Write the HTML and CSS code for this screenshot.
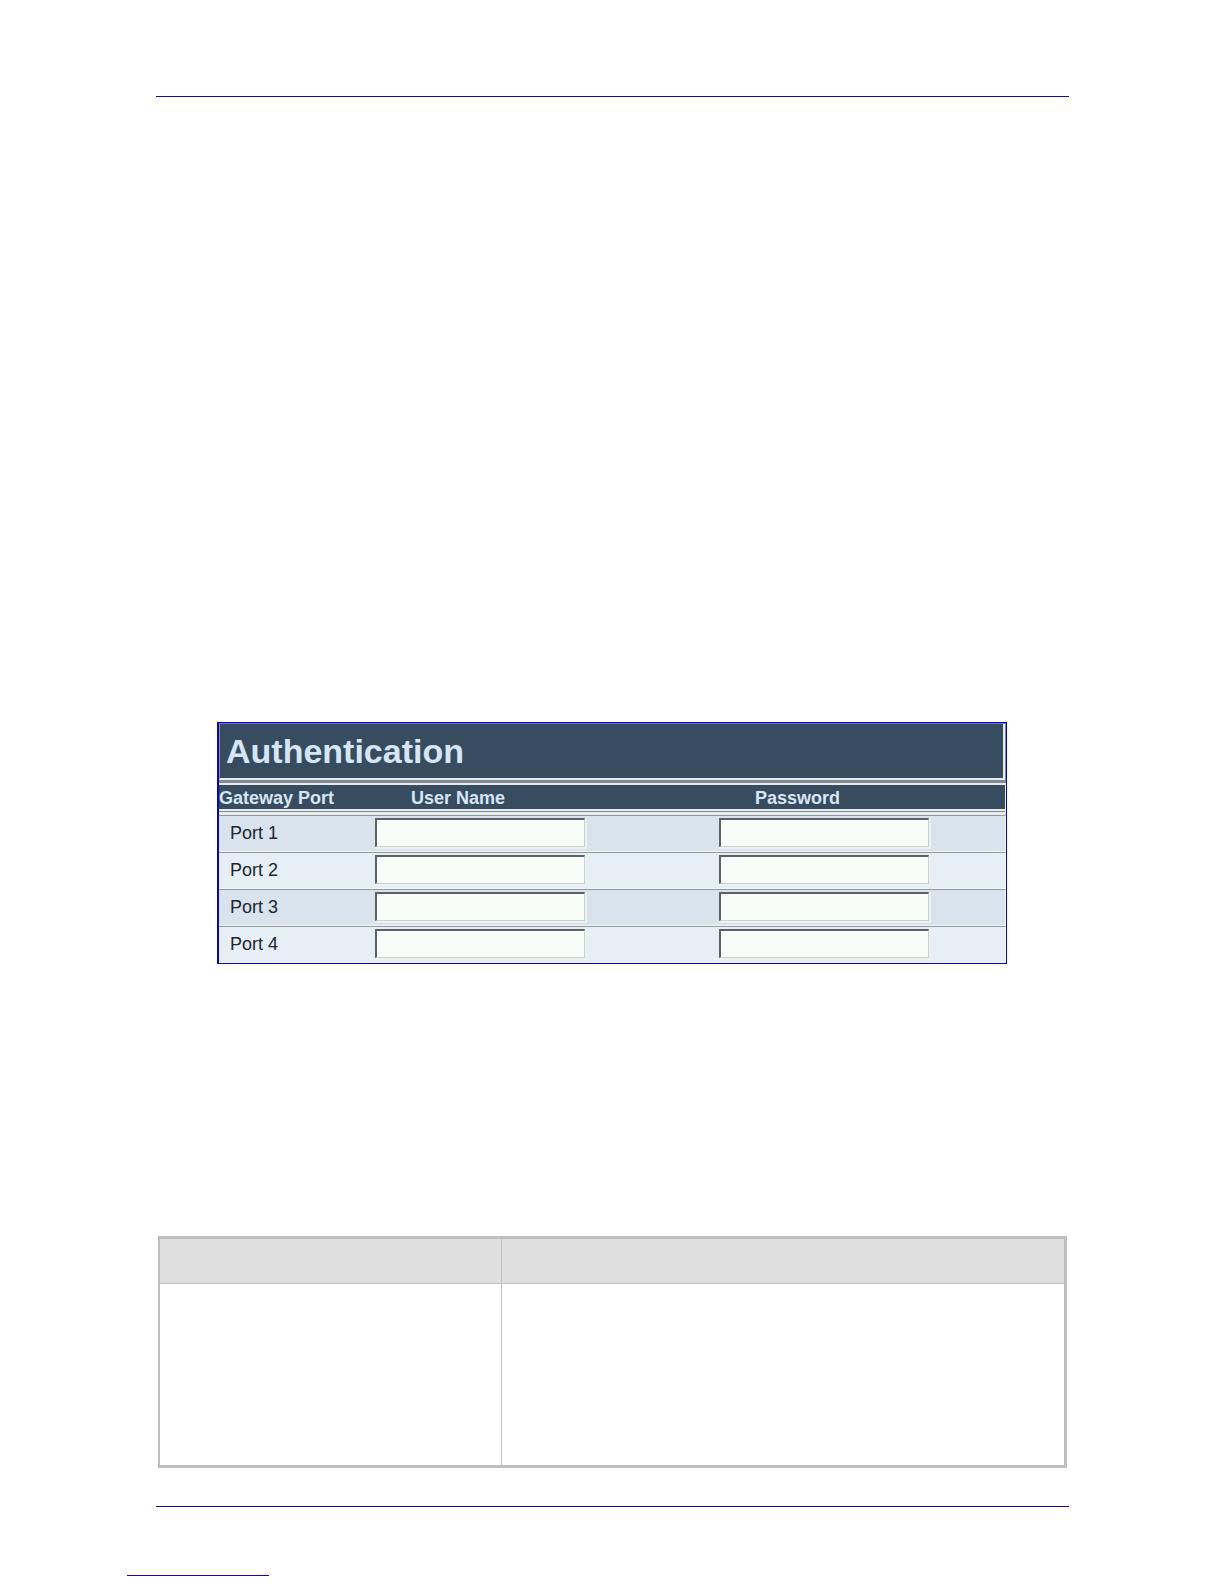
FILE: index.html
```html
<!DOCTYPE html>
<html lang="en">
<head>
    <meta charset="UTF-8">
    <meta name="viewport" content="width=device-width, initial-scale=1.0">
    <title>Authentication</title>
    <link rel="stylesheet" href="styles.css">
</head>
<body>
    <header class="page-header"></header>

    <main class="page">
        <form class="auth">
            <div class="auth-titlebar">
                <h1 class="auth-title">Authentication</h1>
            </div>
            <table class="auth-table">
                <colgroup>
                    <col class="col-port">
                    <col class="col-user">
                    <col>
                </colgroup>
                <thead>
                    <tr>
                        <th scope="col">Gateway Port</th>
                        <th scope="col" class="field-head" id="userHead">User Name</th>
                        <th scope="col" class="field-head" id="passHead">Password</th>
                    </tr>
                </thead>
                <tbody>
                    <tr>
                        <td class="port"><label for="user1" id="port1">Port 1</label></td>
                        <td><input type="text" class="field" id="user1"></td>
                        <td><input type="password" class="field" id="pass1" aria-labelledby="port1 passHead"></td>
                    </tr>
                    <tr>
                        <td class="port"><label for="user2" id="port2">Port 2</label></td>
                        <td><input type="text" class="field" id="user2"></td>
                        <td><input type="password" class="field" id="pass2" aria-labelledby="port2 passHead"></td>
                    </tr>
                    <tr>
                        <td class="port"><label for="user3" id="port3">Port 3</label></td>
                        <td><input type="text" class="field" id="user3"></td>
                        <td><input type="password" class="field" id="pass3" aria-labelledby="port3 passHead"></td>
                    </tr>
                    <tr>
                        <td class="port"><label for="user4" id="port4">Port 4</label></td>
                        <td><input type="text" class="field" id="user4"></td>
                        <td><input type="password" class="field" id="pass4" aria-labelledby="port4 passHead"></td>
                    </tr>
                </tbody>
            </table>
        </form>

        <!-- Parameter / description table -->
        <table class="params">
            <colgroup>
                <col class="col-param">
                <col>
            </colgroup>
            <thead>
                <tr><th></th><th></th></tr>
            </thead>
            <tbody>
                <tr><td></td><td></td></tr>
            </tbody>
        </table>
    </main>

    <footer class="page-footer">
        <div class="footer-mark"></div>
    </footer>
</body>
</html>
```

FILE: styles.css
```css
* {
    box-sizing: border-box;
}

body {
    margin: 0;
    padding: 0 155px 0 156px;
    background: #fff;
    font-family: "Liberation Sans", Arial, sans-serif;
    font-size: 18px;
    color: #20262e;
}

.page-header {
    height: 97px;
    border-bottom: 1px solid #1208a4;
}

.page {
    padding: 625px 2px 38px;
}

/* Authentication panel */
.auth {
    margin: 0 60px 0 59px;
    border: 1px solid #0a05b4;
    border-left-width: 2px;
    background: #f0f5f8;
}

.auth-titlebar {
    padding: 0 1px 3px 0;
    background: #828a91;
    border-top: 1px solid #6872dc;
}

.auth-title {
    margin: 0;
    padding-left: 6px;
    background: #384c60;
    border-left: 1px solid #8a9096;
    border-right: 2px solid #e6ebee;
    border-bottom: 2px solid #e6ebee;
    color: #d6e6f6;
    font-size: 34px;
    font-weight: bold;
    line-height: 54px;
}

.auth-table {
    width: 100%;
    table-layout: fixed;
    border-collapse: separate;
    border-spacing: 0;
    border-top: 2px solid #e6ebee;
}

.col-port {
    width: 156px;
}

.col-user {
    width: 344px;
}

/* dark bar with a grooved line under it */
.auth-table th {
    height: 30px;
    padding: 0 0 4px;
    background: linear-gradient(#384c60 24px, #e6ebee 24px, #e6ebee 26px, #858b90 26px, #858b90 27px, #e6ebee 27px);
    color: #d6e6f6;
    line-height: 26px;
    text-align: left;
}

.auth-table th:last-child {
    border-right: 1px solid #e6ebee;
}

.auth-table th.field-head {
    padding-left: 36px;
}

.auth-table td {
    height: 37px;
    padding: 0;
    border-top: 1px solid #8f989c;
    border-bottom: 1px solid #f2f7f8;
    background: #e6eef6;
}

.auth-table tbody tr:nth-child(odd) td {
    background: #d8e3ee;
}

.auth-table td:last-child {
    border-right: 1px solid #f2f7f8;
}

.auth-table td.port {
    padding-left: 11px;
}

.field {
    display: block;
    width: 210px;
    height: 29px;
    margin: 0 0 2px;
    padding: 0 4px;
    background: #f8fdf9;
    border: 1px solid #c9d0ce;
    border-top: 2px solid #5c6263;
    border-left: 2px solid #5c6263;
    border-radius: 0;
    box-shadow: 1px 1px 0 1px #edf2f1;
    font: inherit;
    outline: none;
}

/* Parameter table */
.params {
    width: 100%;
    margin-top: 272px;
    table-layout: fixed;
    border-collapse: separate;
    border-spacing: 0;
    border: 3px solid #bfbfbf;
    border-left-width: 2px;
}

.col-param {
    width: 342px;
}

.params th {
    height: 45px;
    background: #dfdfdf;
    border-bottom: 1px solid #bfbfbf;
}

.params td {
    height: 181px;
}

.params th:first-child,
.params td:first-child {
    border-right: 1px solid #bfbfbf;
}

.page-footer {
    border-top: 1px solid #1208a4;
    padding-top: 68px;
}

.footer-mark {
    width: 142px;
    margin-left: -29px;
    border-top: 1px solid #1208a4;
}
```
